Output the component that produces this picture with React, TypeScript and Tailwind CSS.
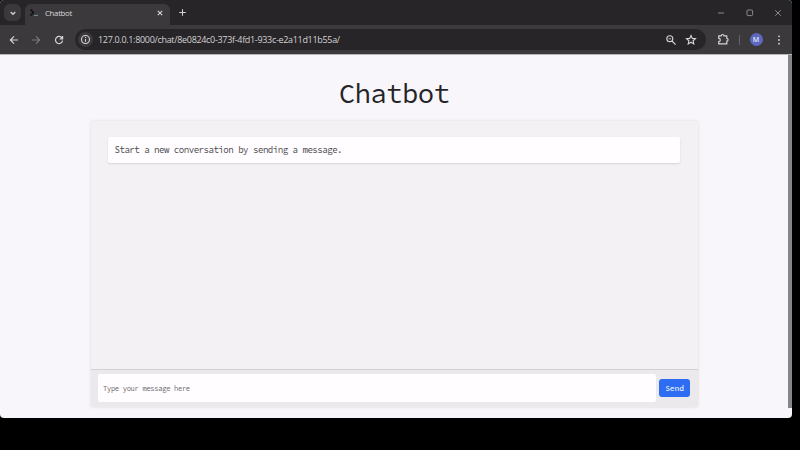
import React from "react";

function Toolbar() {
  return (
    <div className="flex h-[29px] items-center bg-[#3b393c] pl-[7px] text-[#d6d4d7]">
      <svg className="h-[14px] w-[14px]" viewBox="0 0 14 14" fill="none" stroke="currentColor" strokeWidth="1.2"><path d="M11 7H3.4M7 3.4 3.4 7 7 10.6" /></svg>
      <svg className="ml-[8px] h-[14px] w-[14px] text-[#7c7a7d]" viewBox="0 0 14 14" fill="none" stroke="currentColor" strokeWidth="1.1"><path d="M3 7h7.6M7 3.4 10.6 7 7 10.6" /></svg>
      <svg className="ml-[9px] h-[14px] w-[14px]" viewBox="0 0 14 14" fill="none" stroke="currentColor" strokeWidth="1.2"><path d="M10.1 5A3.6 3.6 0 1 0 10.6 7.7M10.6 3v2.9H7.7" /></svg>
      <div className="ml-[9px] flex h-[21px] w-[631px] items-center rounded-full bg-[#272528] pl-[3px] pr-[9px]">
        <div className="flex h-[15px] w-[15px] items-center justify-center rounded-full bg-[#3b393c]">
          <svg className="h-[11px] w-[11px]" viewBox="0 0 11 11" fill="none" stroke="currentColor"><circle cx="5.5" cy="5.5" r="4" strokeWidth="1.1" /><path d="M5.5 5v2.7M5.5 3v1" strokeWidth="1.1" /></svg>
        </div>
        <span className="ml-[5px] whitespace-nowrap font-['Open_Sans',sans-serif] text-[9px] leading-none tracking-[-0.316px] text-[#d3d1d4]">127.0.0.1:8000/chat/8e0824c0-373f-4fd1-933c-e2a11d11b55a/</span>
        <svg className="ml-auto h-[12px] w-[12px]" viewBox="0 0 12 12" fill="none" stroke="currentColor" strokeWidth="1.1"><circle cx="4.8" cy="4.8" r="3" /><path d="m7 7 3.6 3.6" /><path d="M3.5 4.8h2.6" strokeWidth=".9" /></svg>
        <svg className="ml-[8px] h-[12px] w-[12px]" viewBox="0 0 12 12" fill="none" stroke="currentColor" strokeWidth="1.1"><path d="m6 1.5 1.3 2.9 3.2.3-2.4 2.1.7 3.1L6 8.2 3.2 9.9l.7-3.1-2.4-2.1 3.2-.3Z" /></svg>
      </div>
      <svg className="ml-[11px] h-[13px] w-[13px]" viewBox="0 0 13 13" fill="none" stroke="currentColor" strokeWidth="1.2" strokeLinejoin="round"><path d="M1.7 2.8h2.6a1.3 1.3 0 0 1 2.6 0h2.9v2.7a1.3 1.3 0 0 1 0 2.6v2.8H1.7V8.5a1.6 1.6 0 0 0 0-3.2Z" /></svg>
      <div className="ml-[8.5px] h-[10px] w-px bg-[#656366]" />
      <div className="ml-[10px] flex h-[13px] w-[13px] items-center justify-center rounded-full bg-[#5c69c0] font-['Open_Sans',sans-serif] text-[7px] font-semibold leading-none text-[#e4e4f0]">M</div>
      <svg className="ml-[13px] h-[12px] w-[6px]" viewBox="0 0 6 12" fill="currentColor"><circle cx="3" cy="2.3" r=".9" /><circle cx="3" cy="6" r=".9" /><circle cx="3" cy="9.7" r=".9" /></svg>
    </div>
  );
}

function TabStrip() {
  return (
    <div className="flex h-[25px] bg-[#272528] pl-1 text-[#d0ced1]">
      <div className="mt-1 flex h-[17px] w-[17px] items-center justify-center rounded-[6px] bg-[#3b393c]">
        <svg className="h-2 w-2" viewBox="0 0 8 8" fill="none" stroke="currentColor" strokeWidth="1.3"><path d="m1.7 3 2.3 2.3L6.3 3" /></svg>
      </div>
      <div className="ml-[4px] mt-1 flex h-[21px] w-[145px] items-center rounded-t-[6px] bg-[#3b393c] pb-[3px] pl-[4px] pr-[6px]">
        <svg className="h-[10px] w-[11px]" viewBox="0 0 11 10" fill="none"><path d="m1.5 1.5 3 3-3 3" stroke="#111012" strokeWidth="1.7" /><path d="M5 7.4h4" stroke="#709090" strokeWidth="1" /></svg>
        <span className="ml-[5px] mt-px font-['Open_Sans',sans-serif] text-[7.8px] leading-none tracking-[-0.3px] text-[#dad8db]">Chatbot</span>
        <svg className="ml-auto h-2 w-2" viewBox="0 0 8 8" stroke="currentColor" strokeWidth="1.2"><path d="m1.8 1.8 4.4 4.4m0-4.4L1.8 6.2" /></svg>
      </div>
      <svg className="ml-[8px] mt-[8px] h-[9px] w-[9px]" viewBox="0 0 9 9" stroke="currentColor" strokeWidth="1.1"><path d="M4.5 1.2v6.6M1.2 4.5h6.6" /></svg>
      <div className="ml-auto mr-[9px] mt-[8px] flex gap-[18.5px] text-[#8b898c]">
        <svg className="h-[10px] w-[10px]" viewBox="0 0 10 10" stroke="currentColor"><path d="M2 5h6" /></svg>
        <svg className="h-[10px] w-[10px]" viewBox="0 0 10 10" fill="none" stroke="currentColor"><rect x="2" y="2" width="5.6" height="5.6" rx="1" /></svg>
        <svg className="h-[10px] w-[10px]" viewBox="0 0 10 10" stroke="currentColor"><path d="m2.2 2.2 5.6 5.6m0-5.6L2.2 7.8" /></svg>
      </div>
    </div>
  );
}

export default function App() {
  return (
    <div className="h-[450px] w-[800px] overflow-hidden bg-black font-['Source_Code_Pro','Liberation_Mono',monospace]">
      <div className="flex h-[418px] w-[792px] flex-col overflow-hidden rounded-[4px] bg-[#f8f6fb]">
        <TabStrip />
        <Toolbar />
        <div className="flex flex-1 border-t border-[#b9b7ba]">
          <main className="flex w-[788px] flex-col items-center">
            <h1 className="mt-[19px] h-[47px] whitespace-nowrap text-[27.4px] leading-[38px] tracking-[-0.65px] text-[#252427]">Chatbot</h1>
            <section className="flex h-[286px] w-[607px] flex-col rounded-[2px] bg-[#f3f1f4] shadow-[0_0_3px_rgba(0,0,0,0.12)]">
              <div className="flex-1 px-[17.5px] pt-[16px]">
                <div className="flex h-[26px] w-[572px] items-center whitespace-nowrap rounded-[2px] bg-[#fffdff] pl-[6.5px] text-[9.1px] leading-none tracking-[-0.51px] text-[#4b494c] shadow-[0_1px_2px_rgba(0,0,0,0.12)]">Start a new conversation by sending a message.</div>
              </div>
              <form className="flex h-[38px] items-center rounded-b-[2px] border-t border-[#d2d0d3] bg-[#ebe9ec] px-[7.5px] pb-px">
                <input className="h-[28px] w-[558px] rounded-[2px] bg-[#fffdff] pl-[5px] text-[7.1px] tracking-[-0.31px] text-[#525053] outline-none placeholder:text-[#6b696c]" placeholder="Type your message here" />
                <button type="button" className="ml-[3px] h-[18px] w-[31px] rounded-[3px] bg-[#2c6df3] text-[8px] font-medium leading-none tracking-[-0.15px] text-[#f0f5ff]">Send</button>
              </form>
            </section>
          </main>
          <div className="h-[353px] w-1 bg-[#868587]" />
        </div>
      </div>
    </div>
  );
}
